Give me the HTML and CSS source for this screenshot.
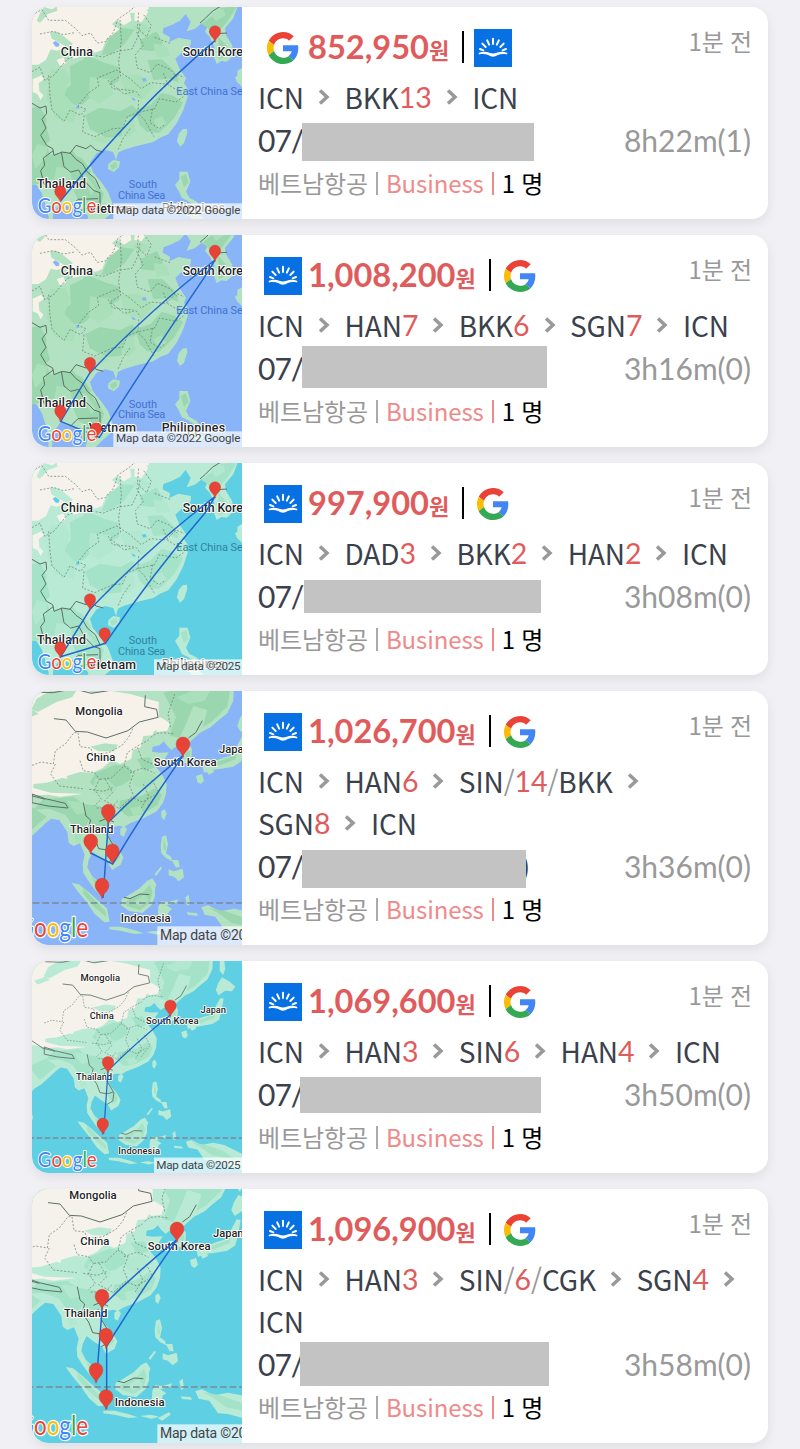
FILE: index.html
```html
<!DOCTYPE html>
<html lang="ko">
<head>
    <meta charset="UTF-8">
    <meta name="viewport" content="width=device-width, initial-scale=1.0">
    <title>항공권 목록</title>
    <link rel="stylesheet" href="styles.css">
</head>
<body>

    <!-- Shared icons and map bases -->
    <svg class="defs" width="0" height="0" aria-hidden="true">
        <symbol id="google" viewBox="0 0 48 48">
            <path fill="#ea4335" d="M24 9.5c3.54 0 6.71 1.22 9.21 3.6l6.85-6.85C35.9 2.38 30.47 0 24 0 14.62 0 6.51 5.38 2.56 13.22l7.98 6.19C12.43 13.72 17.74 9.5 24 9.5z"/>
            <path fill="#4285f4" d="M46.98 24.55c0-1.57-.15-3.09-.38-4.55H24v9.02h12.94c-.58 2.96-2.26 5.48-4.78 7.18l7.73 6c4.51-4.18 7.09-10.36 7.09-17.65z"/>
            <path fill="#fbbc05" d="M10.53 28.59c-.48-1.45-.76-2.99-.76-4.59s.27-3.14.76-4.59l-7.98-6.19C.92 16.46 0 20.12 0 24c0 3.88.92 7.54 2.56 10.78l7.97-6.19z"/>
            <path fill="#34a853" d="M24 48c6.48 0 11.93-2.13 15.89-5.81l-7.73-6c-2.15 1.45-4.92 2.3-8.16 2.3-6.26 0-11.57-4.22-13.47-9.91l-7.98 6.19C6.51 42.62 14.62 48 24 48z"/>
        </symbol>
        <symbol id="sunrise" viewBox="0 0 114 114">
            <rect width="114" height="114" fill="#0770e3"/>
            <path d="M57 29v16M39.500 34l6 13M74.500 34l-6 13M25 44l10 10M89 44l-10 10M18 60l10 4M96 60l-10 4" fill="none" stroke="#fff" stroke-width="6" stroke-linecap="round"/>
            <path d="M15 71c10-4 22-4 31 0 7 3 15 3 22 0 9-4 21-4 31 0 2 2 1 6-2 5-9-2-18-1-26 2-5 3-9 5-14 5s-9-2-14-5c-8-3-17-4-26-2-3 1-4-3-2-5z" fill="#fff"/>
        </symbol>
        <symbol id="chevron" viewBox="0 0 12 16">
            <path d="M2 1.500l7 6.500-7 6.500" fill="none" stroke="#999" stroke-width="3.500"/>
        </symbol>
        <symbol id="pin" viewBox="-17 -50 34 50" overflow="visible">
            <path fill="#e74336" stroke="#c9382c" stroke-width="1" d="M0 0C-2-14-17-18-17-33a17 17 0 0 1 34 0C17-18 2-14 0 0z"/>
        </symbol>

        <!-- East Asia, close zoom -->
        <g id="region">
            <rect class="sea" x="0" y="0" width="720" height="720"/>
            <path class="land" d="M0 0H660L640 55 615 85 618 105 636 135 642 165 620 185 604 183 590 192 580 165 583 140 570 112 555 95 564 76 545 70 525 86 500 94 512 66 497 42 480 62 455 75 430 84 428 100 450 112 448 126 475 113 513 120 512 135 485 158 466 176 478 205 498 235 492 250 502 264 503 290 490 330 470 370 445 403 420 413 400 426 350 438 310 450 294 458 288 480 280 456 255 450 230 460 210 488 218 515 245 548 264 575 278 612 272 642 245 665 220 690 195 690 205 650 188 628 150 622 122 608 100 640 92 720 84 720 86 650 75 610 65 580 50 556 36 548 0 548z"/>
            <path class="land" d="M265 492l15-12 20 4-3 18-16 14-17-9zM488 388l12-2 2 12-10 32-12 10-9-16 5-22zM478 515l25 0 8 30-13 30 10 18 23 12 8 14-17-4-18-12-18-9-10-21-11-18 13-16zM500 625l30 10 20 20-10 12-25-10zM666 204l-14 8 0 15-7 5 6 14 15 14z"/>
            <path class="sand" d="M0 0H392L385 28 360 40 330 38 334 62 312 76 290 60 276 72 300 90 302 120 285 128 262 112 246 150 225 158 205 142 190 168 160 176 135 145 110 152 92 148 78 180 55 194 0 195z"/>
            <path class="land" d="M62 36l10-14 24 6 14-8 2 12-28 10-24 26-10-6zM90 95l20 0 24 16 24 20-10 14-30-16-24-14z"/>
            <path class="sand" d="M38 238l26-12 8 12-16 12 2 24 12 12-8 14-10-18-14-6zM110 180l20-8 8 18-18 8zM345 30l26-6 14 12-20 30-22-4z"/>
            <path class="forest" d="M150 198l58-28 50 20 42 12-2 40-40 24-38 18-30 28-48 6-14-42 24-22zM195 345l44-22 62 10 35-18 22 22-34 28-20 44-44 4-50-26zM345 330l46-16 34-36 36 10 28 20-26 46-26 26-20 18-36-2-22-22zM0 330l60-10 20 38-10 60 22 48 46-12 48 20 28 40-24 30-22-14-60 6-70 20-38-26zM120 470l38-18 52 70 42 60-8 28-34 14-34-20-26-56zM268 112l36-28 40 4-30 44-40 30-30 4zM545 72l60-48 48-8-28 44-24 30-24 4zM595 110l25 28 2 30-26 10zM360 120l50-26 20 36-30 24-36-4zM382 180l44-2 38 36 12 34-30-12-46 4zM482 530l16-8 8 26-14 14zM270 495l18-9 4 14-16 10zM182 190l14-20 12 8-10 20zM60 370l18 2 12 50-16 12z"/>
            <path class="grass" d="M90 210l46-4 14 34-16 44 38 40-12 44-54-14-26-60zM210 230l60 8 10 44-44 30-30-22zM300 230l54-8 48 36-32 40-52-12zM400 130l40 8 10 30-40 4zM52 432l30 10-6 34-30 30-10-40zM110 500l40 6 8 44-32 20-24-30zM315 356l24-8 8 44-24 20-20-12zM400 360l26-12 12 22-22 22zM180 520l18 4 30 44-14 16zM570 40l40-14 6 20-28 18zM338 80l30-10 20 14-20 20zM215 415l30-8 24 14-20 10z"/>
            <path class="sea" d="M98 128l8-5 12 8 0 8-10 2zM334 292l11 4 2 6-9-1zM365 236l12-3 3 10-10 2zM168 318l8-2 3 9-9 2z"/>
            <path class="province" d="M36 45l30-16 20 32 50 0 30 24 20 22 26-8 20 30 24-4 24-28 14-40 30-20 24-20M60 102l40-8 30 10 34-6M36 215l24-14 14 40 26-14 42-50 46-16 62 10 46-18 40-6 18-38 6-40M86 226l4 60 6 44 36 34 18-34 32 16 16-18-24-10 30-38 32-22-4-24 58-24 40 26 34 30 28-18 46 4 30-30 24 10M300 60l4 60-8 68 6 40-32 20 42 34 36-8 14 18M192 346l-4 50 36 14 54-24 30-2 14-34 30-12 52-12 14-30 50 10 22-16M330 386l-20 28-16 36M356 300l-2 40 20 20 28 50M398 326l-8 42 28 18 16-12M350 96l20 40-24 28 6 40 38 14 22-26 38 16 26 28M404 112l46 18M356 38l-4 46 28 26 14-34-26-36M430 220l14 34 44 26M264 240l14 26 62 6"/>
            <path class="frontier" d="M36 310l24 14 18-6 2 22-14 18 12 26-16 22 18 30 18 10 4 20 24-10 24 4 18-24 30 10 14-10 16 14 22 6M100 452l-30 22 4 22-12 16 10 40 18 14M124 456l8 44 20 16 24-6 20 36 26 26 18 6 0 44-20 4-30 0-16 18M150 458l18 20 20 14 14 24 24 20 14 30M150 622l24-24 60-2M540 69l16-14 22-22 24-14M567 95l24 6 30-2"/>
            <g class="water-label">
                <text x="469" y="285" textLength="217">East China Sea</text>
                <text x="326" y="565">South</text>
                <text x="294" y="597" textLength="142">China Sea</text>
            </g>
            <g class="label region-label">
                <text x="122" y="167" textLength="97">China</text>
                <text x="488" y="167" textLength="200">South Korea</text>
                <text x="51" y="564" textLength="147">Thailand</text>
                <text x="206" y="638" textLength="142">Vietnam</text>
                <text x="425" y="637" textLength="190">Philippines</text>
            </g>
        </g>

        <!-- Whole of East and South East Asia, far zoom -->
        <g id="asia">
            <rect class="sea" x="-20" y="0" width="790" height="860"/>
            <path class="land" d="M-20 0H642L640 50 622 88 592 112 572 130 540 146 525 160 505 178 516 196 514 225 498 238 488 234 492 212 478 202 484 188 464 190 455 198 440 184 432 172 418 184 398 188 396 203 418 206 446 205 430 232 408 250 424 268 440 300 438 330 428 358 410 382 372 402 330 418 310 430 300 425 275 430 264 452 274 472 294 492 310 520 302 542 276 558 264 536 238 520 218 504 206 528 202 550 216 576 236 594 242 630 228 622 205 590 190 566 188 540 194 512 180 478 160 486 146 476 142 444 118 408 94 404 78 416 46 446 28 462 0 480-20 505z"/>
            <path class="land" d="M155 597l22 4 28 22 26 24 30 26 8 40-16 2-28-24-26-38-24-28zM268 728l34 0 40 10 30 10-28 2-42-10-34-4zM305 645l18-10 36-22 22-22 16-8 12 18-4 14 0 22-10 26-28 24-40-6-24-18zM415 668l8-16 22 2 30-8-6 10-30 8 18 12-10 6-8 24-8-16-8 18-10-4zM378 744l32-4 26 6-24 6zM432 750l34-18 4 8-26 18zM496 640l10-8 4 28-8 6zM500 685l30 2 4 8-30-2zM544 670l20-6 36 18 42-8 40 8 70 34 10 60-30-10-60-20-30-8-30-2-26-38-32-6zM426 458l12-4 6 26-6 28 16 12 2 12-18-10-14-14-2-22zM446 556l16 6 26-8 4 26-16 12-14-14-16-4zM455 528l20 0 4 22-12 0zM424 382l10-6 6 14-8 18-8-8zM301 434l12-8 8 10-10 22-10-6zM404 570l18-22 4 4-18 24zM-20 560l10 2 6 24-6 12-10 0zM528 276l18-6 6 20-10 10-10-6zM560 262l18-8 4 10-16 8zM548 250l24-14 36-14 28-8 18-34 14-26 12 2-8 46-8 30-24 16-36 6-28 4-24 8zM660 102l14-22 28 16 20 18-12 16-24-2-24 16-10-18zM666 20l14-20 6 50-8 22-12-16z"/>
            <path class="sand" d="M-20 0H180L215 28 268 20 330 30 416 54 416 110 440 118 404 140 396 154 370 156 362 190 338 198 334 224 300 240 274 228 248 252 218 266 180 264 140 276 146 306 186 330 120 338 86 332 50 334-20 320zM388 112l34-12 28 18-8 22-30 4zM90 60l60-30 90-4 80 10-30 30-100 14z"/>
            <path class="land" d="M50 44l38-22 84-6-16 24-46 14-56 30-20-8zM0 92l40-14 16 12-44 16zM40 300l40-4 46-14 56 8 20 40-110-4-52-14zM210 188l44-10 40 4-12 20-46 0z"/>
            <path class="forest" d="M70 346l90-8 28 20 20 46-18 40-30-18-24-34-50-18-46 4zM225 268l60-26 40 4 20 34-44 26-62 10-30-20zM300 350l66-14 40-24 20 20-14 32-46 26-42 8-28-22zM195 360l44 6 34 28-12 40-30 2-34-34zM430 26l92-26 110 6-10 62-48 46-26 14 14-50-42-12-20 50-22 46-30-8 20-56zM266 460l28 38 6 22-16 16-18-26zM214 578l22 20 0 20zM190 612l34 36 32 34 2 16-34-28-34-40zM320 650l44-20 26-28 8 24-10 32-28 20-40-12zM432 462l8 40-10-8zM566 672l50 10 60 20 60 40-50-14-50-10-40-30zM560 246l74-28 22-28-10 36-46 18zM350 224l40-4 14 30-32 12zM-20 400l60-28 40 26-60 52zM495 205l16-5-2 25-10 2z"/>
            <path class="grass" d="M225 284l40 4 28 26-26 20-48-8zM330 270l50-10 34 24-30 30-44-8zM140 350l44 4 16 30-30 8zM470 40l44-18 60-8-20 36-50 10zM150 420l30 14 10 34-22 8zM330 372l32-6 8 20-30 10zM340 655l34-24 12 18-26 18z"/>
            <path class="province" d="M36 244l28-10 36 6 6-40 30-20 26-34 12 0 6 42 32 4 8 20 46-6 40-22 20-24 14-30M106 240l-14 30 26 36 70 8M180 230l10 30 34 6 14 20-14 30 20 30-22 20M240 286l34-4 38-36 10-40 30-20 34-18M256 286l22 40-24 24 44 24 36-34 34 14 34-20M312 246l30 20-14 38 14 34-34 32M330 266l40-14 34 16M352 190l14 36 40 18M370 300l16 36-22 36M396 288l20 36-34 44M392 160l18-12 22-2 32 4M452 130l-8-40 20-60M208 316l42 6 30-12M230 372l42 0 22-22"/>
            <path class="frontier" d="M102 104l36 4 28 34 36 2 56 18 66-22 34-26 56-14-4-24-36-8 2-34M40 24l60 2 60-12 54 14 52-8M36 330l40 14 60 14 8 14-60-6-48-10zM190 356l8 40 14 12-8 28 20 26 12 32 26 4 22-6M238 412l20-8 24 10M252 424l10 30 24 40-4 30-20 12M-20 300l50 34 46 12M505 162l22-16 20-36M312 640l18 4 30-14 28 2"/>
            <path class="equator" d="M-20 657H770"/>
            <g class="label">
                <text x="166" y="94" textLength="142">Mongolia</text>
                <text x="199" y="230" textLength="87">China</text>
                <text x="401" y="246" textLength="189">South Korea</text>
                <text x="597" y="208" textLength="92">Japan</text>
                <text x="150" y="447" textLength="130">Thailand</text>
                <text x="302" y="715" textLength="150">Indonesia</text>
            </g>
        </g>

        <text id="wordmark" class="wordmark" textLength="176" lengthAdjust="spacingAndGlyphs"><tspan fill="#4285f4">G</tspan><tspan fill="#ea4335">o</tspan><tspan fill="#fbbc05">o</tspan><tspan fill="#4285f4">g</tspan><tspan fill="#34a853">l</tspan><tspan fill="#ea4335">e</tspan></text>
    </svg>

    <main class="fare-list">

        <article class="fare">
            <svg class="map classic" viewBox="36 21 630 636" preserveAspectRatio="xMidYMid slice">
                <use href="#region"/>
                <path class="route" d="M585 122Q350 320 122 602"/>
                <use href="#pin" x="568" y="77" width="34" height="50"/>
                <use href="#pin" x="104" y="557" width="34" height="50"/>
                <rect class="credit-bg" x="280" y="610" width="390" height="50"/>
                <text class="credit" x="288" y="643" textLength="373">Map data ©2022 Google</text>
                <use href="#wordmark" x="53" y="639"/>
            </svg>
            <div class="info">
                <div class="top">
                    <svg class="logo google"><use href="#google"/></svg>
                    <strong class="price">852,950<small>원</small></strong>
                    <i class="bar"></i>
                    <svg class="logo"><use href="#sunrise"/></svg>
                    <time>1분 전</time>
                </div>
                <div class="path">
                    <span class="leg">ICN<svg class="arrow"><use href="#chevron"/></svg></span>
                    <span class="leg">BKK<b>13</b><svg class="arrow"><use href="#chevron"/></svg></span>
                    <span class="leg">ICN</span>
                </div>
                <div class="dates"><span class="date">07/</span><span class="mask mask-1"></span><span class="duration">8h22m(1)</span></div>
                <div class="meta">베트남항공 <i class="line"></i> <em>Business</em> <i class="line pink"></i> <span class="people">1 명</span></div>
            </div>
        </article>

        <article class="fare">
            <svg class="map classic" viewBox="36 47 630 636" preserveAspectRatio="xMidYMid slice">
                <use href="#region"/>
                <path class="route" d="M585 122Q400 262 210 460L122 606 238 654Q380 430 555 171L585 122"/>
                <use href="#pin" x="568" y="77" width="34" height="50"/>
                <use href="#pin" x="193" y="414" width="34" height="50"/>
                <use href="#pin" x="104" y="557" width="34" height="50"/>
                <use href="#pin" x="211" y="610" width="34" height="50"/>
                <rect class="credit-bg" x="280" y="636" width="390" height="50"/>
                <text class="credit" x="288" y="669" textLength="373">Map data ©2022 Google</text>
                <use href="#wordmark" x="53" y="665"/>
            </svg>
            <div class="info">
                <div class="top">
                    <svg class="logo"><use href="#sunrise"/></svg>
                    <strong class="price">1,008,200<small>원</small></strong>
                    <i class="bar"></i>
                    <svg class="logo google"><use href="#google"/></svg>
                    <time>1분 전</time>
                </div>
                <div class="path">
                    <span class="leg">ICN<svg class="arrow"><use href="#chevron"/></svg></span>
                    <span class="leg">HAN<b>7</b><svg class="arrow"><use href="#chevron"/></svg></span>
                    <span class="leg">BKK<b>6</b><svg class="arrow"><use href="#chevron"/></svg></span>
                    <span class="leg">SGN<b>7</b><svg class="arrow"><use href="#chevron"/></svg></span>
                    <span class="leg">ICN</span>
                </div>
                <div class="dates"><span class="date">07/</span><span class="mask mask-2"></span><span class="duration">3h16m(0)</span></div>
                <div class="meta">베트남항공 <i class="line"></i> <em>Business</em> <i class="line pink"></i> <span class="people">1 명</span></div>
            </div>
        </article>

        <article class="fare">
            <svg class="map fresh" viewBox="36 21 630 636" preserveAspectRatio="xMidYMid slice">
                <use href="#region"/>
                <path class="route" d="M585 122Q400 262 210 460L122 602 256 562Q400 350 555 171L585 122"/>
                <use href="#pin" x="568" y="77" width="34" height="50"/>
                <use href="#pin" x="193" y="413" width="34" height="50"/>
                <use href="#pin" x="237" y="515" width="34" height="50"/>
                <use href="#pin" x="104" y="557" width="34" height="50"/>
                <rect class="credit-bg" x="402" y="610" width="270" height="50"/>
                <text class="credit" x="409" y="643" textLength="253">Map data ©2025</text>
                <use href="#wordmark" x="53" y="639"/>
            </svg>
            <div class="info">
                <div class="top">
                    <svg class="logo"><use href="#sunrise"/></svg>
                    <strong class="price">997,900<small>원</small></strong>
                    <i class="bar"></i>
                    <svg class="logo google"><use href="#google"/></svg>
                    <time>1분 전</time>
                </div>
                <div class="path">
                    <span class="leg">ICN<svg class="arrow"><use href="#chevron"/></svg></span>
                    <span class="leg">DAD<b>3</b><svg class="arrow"><use href="#chevron"/></svg></span>
                    <span class="leg">BKK<b>2</b><svg class="arrow"><use href="#chevron"/></svg></span>
                    <span class="leg">HAN<b>2</b><svg class="arrow"><use href="#chevron"/></svg></span>
                    <span class="leg">ICN</span>
                </div>
                <div class="dates"><span class="date">07/</span><span class="mask mask-3"></span><span class="duration">3h08m(0)</span></div>
                <div class="meta">베트남항공 <i class="line"></i> <em>Business</em> <i class="line pink"></i> <span class="people">1 명</span></div>
            </div>
        </article>

        <article class="fare">
            <svg class="map classic" viewBox="36 21 630 762" preserveAspectRatio="xMidYMid slice">
                <use href="#asia"/>
                <path class="route" d="M489 215Q370 310 265 415L249 642M212 507L278 540Q380 370 489 215"/>
                <use href="#pin" x="468" y="159" width="42" height="61"/>
                <use href="#pin" x="244" y="361" width="42" height="61"/>
                <use href="#pin" x="191" y="450" width="42" height="61"/>
                <use href="#pin" x="256" y="480" width="42" height="61"/>
                <use href="#pin" x="225" y="583" width="42" height="61"/>
                <rect class="credit-bg" x="412" y="727" width="270" height="60"/>
                <text class="credit large" x="420" y="767" textLength="305">Map data ©2025</text>
                <use href="#wordmark" transform="translate(-7 760) scale(1.2)"/>
            </svg>
            <div class="info">
                <div class="top">
                    <svg class="logo"><use href="#sunrise"/></svg>
                    <strong class="price">1,026,700<small>원</small></strong>
                    <i class="bar"></i>
                    <svg class="logo google"><use href="#google"/></svg>
                    <time>1분 전</time>
                </div>
                <div class="path">
                    <span class="leg">ICN<svg class="arrow"><use href="#chevron"/></svg></span>
                    <span class="leg">HAN<b>6</b><svg class="arrow"><use href="#chevron"/></svg></span>
                    <span class="leg">SIN<u>/</u><b>14</b><u>/</u>BKK<svg class="arrow"><use href="#chevron"/></svg></span>
                    <span class="leg">SGN<b>8</b><svg class="arrow"><use href="#chevron"/></svg></span>
                    <span class="leg">ICN</span>
                </div>
                <div class="dates"><span class="date">07/</span><span class="mask mask-4"></span><span class="tail">)</span><span class="duration">3h36m(0)</span></div>
                <div class="meta">베트남항공 <i class="line"></i> <em>Business</em> <i class="line pink"></i> <span class="people">1 명</span></div>
            </div>
        </article>

        <article class="fare">
            <svg class="map fresh" viewBox="-8 21 754 762" preserveAspectRatio="xMidYMid slice">
                <use href="#asia"/>
                <path class="route" d="M489 215Q370 310 265 415L249 642"/>
                <use href="#pin" x="468" y="161" width="42" height="61"/>
                <use href="#pin" x="244" y="364" width="42" height="61"/>
                <use href="#pin" x="225" y="585" width="42" height="61"/>
                <rect class="credit-bg" x="430" y="727" width="320" height="60"/>
                <text class="credit large" x="438" y="767" textLength="303">Map data ©2025</text>
                <use href="#wordmark" transform="translate(13 761) scale(1.2)"/>
            </svg>
            <div class="info">
                <div class="top">
                    <svg class="logo"><use href="#sunrise"/></svg>
                    <strong class="price">1,069,600<small>원</small></strong>
                    <i class="bar"></i>
                    <svg class="logo google"><use href="#google"/></svg>
                    <time>1분 전</time>
                </div>
                <div class="path">
                    <span class="leg">ICN<svg class="arrow"><use href="#chevron"/></svg></span>
                    <span class="leg">HAN<b>3</b><svg class="arrow"><use href="#chevron"/></svg></span>
                    <span class="leg">SIN<b>6</b><svg class="arrow"><use href="#chevron"/></svg></span>
                    <span class="leg">HAN<b>4</b><svg class="arrow"><use href="#chevron"/></svg></span>
                    <span class="leg">ICN</span>
                </div>
                <div class="dates"><span class="date">07/</span><span class="mask mask-5"></span><span class="duration">3h50m(0)</span></div>
                <div class="meta">베트남항공 <i class="line"></i> <em>Business</em> <i class="line pink"></i> <span class="people">1 명</span></div>
            </div>
        </article>

        <article class="fare">
            <svg class="map fresh" viewBox="54 63 630 762" preserveAspectRatio="xMidYMid slice">
                <use href="#asia"/>
                <path class="route" d="M489 215Q370 310 265 415L247 642M489 215Q380 370 278 534L278 722"/>
                <use href="#pin" x="468" y="162" width="42" height="61"/>
                <use href="#pin" x="243" y="364" width="42" height="61"/>
                <use href="#pin" x="255" y="481" width="42" height="61"/>
                <use href="#pin" x="225" y="585" width="42" height="61"/>
                <use href="#pin" x="255" y="665" width="42" height="61"/>
                <rect class="credit-bg" x="430" y="769" width="270" height="60"/>
                <text class="credit large" x="438" y="809" textLength="305">Map data ©2025</text>
                <use href="#wordmark" transform="translate(11 801) scale(1.2)"/>
            </svg>
            <div class="info">
                <div class="top">
                    <svg class="logo"><use href="#sunrise"/></svg>
                    <strong class="price">1,096,900<small>원</small></strong>
                    <i class="bar"></i>
                    <svg class="logo google"><use href="#google"/></svg>
                    <time>1분 전</time>
                </div>
                <div class="path">
                    <span class="leg">ICN<svg class="arrow"><use href="#chevron"/></svg></span>
                    <span class="leg">HAN<b>3</b><svg class="arrow"><use href="#chevron"/></svg></span>
                    <span class="leg">SIN<u>/</u><b>6</b><u>/</u>CGK<svg class="arrow"><use href="#chevron"/></svg></span>
                    <span class="leg">SGN<b>4</b><svg class="arrow"><use href="#chevron"/></svg></span>
                    <span class="leg">ICN</span>
                </div>
                <div class="dates"><span class="date">07/</span><span class="mask mask-6"></span><span class="duration">3h58m(0)</span></div>
                <div class="meta">베트남항공 <i class="line"></i> <em>Business</em> <i class="line pink"></i> <span class="people">1 명</span></div>
            </div>
        </article>

    </main>
</body>
</html>
```
FILE: styles.css
```css
body {
    margin: 0;
    background-color: #f0f0f5;
    font-family: "Noto Sans CJK KR", sans-serif;
    color: #3b414c;
}

.defs {
    display: block;
    height: 0;
}

.fare-list {
    display: flex;
    flex-direction: column;
    gap: 16px;
    padding: 7px 32px 6px;
}

.fare {
    display: flex;
    height: 212px;
    background-color: #ffffff;
    border-radius: 16px;
    overflow: hidden;
    box-shadow: 0 4px 12px rgba(0, 0, 0, 0.08);
}

/* Long routes take a second line */
.fare:nth-child(4),
.fare:nth-child(6) {
    height: 254px;
}

.info {
    flex: 1;
    padding: 16px 16px 12px;
    min-width: 0;
}

/* Price row */
.top {
    display: flex;
    align-items: center;
    height: 50px;
    margin-bottom: 3px;
    padding-left: 6px;
}

.logo {
    width: 38px;
    height: 38px;
    flex: none;
}

.logo.google {
    box-sizing: border-box;
    padding: 3px;
}

.price {
    font-family: Lato, "Noto Sans CJK KR", sans-serif;
    font-size: 32.6px;
    line-height: 50px;
    font-weight: 700;
    color: #e05c5c;
    margin: 2px 0 0 6px;
    white-space: nowrap;
}

.price small {
    font-size: 22px;
}

.bar {
    width: 2px;
    height: 32px;
    background-color: #000;
    margin: -3px 10px 0 13px;
}

time {
    margin: -14px 0 0 auto;
    font-size: 24px;
    line-height: 24px;
    letter-spacing: -0.2px;
    color: #999;
}

/* Airports */
.path {
    display: flex;
    flex-wrap: wrap;
    margin-bottom: 2px;
    font-size: 28px;
    line-height: 42px;
    letter-spacing: -0.1px;
}

.leg {
    display: flex;
    align-items: center;
}

.path b {
    font-family: Lato, sans-serif;
    font-size: 28.5px;
    font-weight: 400;
    color: #e05c5c;
}

.path u {
    color: #999;
    text-decoration: none;
}

.arrow {
    width: 12px;
    height: 16px;
    margin: 0 14.5px 0 14px;
}

/* Dates and duration */
.dates {
    display: flex;
    height: 42px;
    font-family: Lato, sans-serif;
    font-size: 30px;
    line-height: 41px;
}

.date {
    width: 44px;
    letter-spacing: -1px;
}

.mask {
    height: 38px;
    margin-top: 3px;
    background-color: #c3c3c3;
    z-index: 1;
}

.mask-1 { width: 232px; }
.mask-2 { width: 245px; height: 42px; margin-top: -2px; }
.mask-3 { width: 237px; height: 33px; margin: 4px 0 0 2px; }
.mask-4 { width: 224px; margin-top: 4px; }
.mask-5 { width: 241px; height: 36px; margin: 3px 0 0 -2px; }
.mask-6 { width: 249px; height: 44px; margin: -2px 0 0 -2px; }

.tail {
    margin-left: -5px;
}

.duration {
    margin: 0 1px 0 auto;
    color: #999;
}

/* Airline, cabin and passengers */
.meta {
    display: flex;
    align-items: center;
    font-size: 24px;
    line-height: 42px;
    height: 42px;
    letter-spacing: -0.1px;
    color: #999;
    white-space: nowrap;
}

.meta em {
    font-style: normal;
    letter-spacing: -0.1px;
    color: #f08a8a;
}

.line {
    width: 2px;
    height: 23px;
    margin: 0 8px;
    background-color: #aaa;
}

.line.pink {
    background-color: #f08a8a;
}

.people {
    color: #000;
    letter-spacing: -0.3px;
}

/* Maps */
.map {
    width: 210px;
    flex: none;
    align-self: stretch;
    border-radius: 0 0 0 16px;
}

.classic {
    --sea: #8ab4f8;
    --land: #b3e2c3;
    --forest: #9ad6ae;
    --grass: #a9dfb9;
    --sand: #f6f2e9;
    --water-text: #4272cf;
}

.fresh {
    --sea: #5fd0e3;
    --land: #b8ead5;
    --forest: #a4e3c8;
    --grass: #b2e8d0;
    --sand: #f5f1eb;
    --water-text: #31839f;
}

.sea { fill: var(--sea); }
.land { fill: var(--land); }
.forest { fill: var(--forest); }
.grass { fill: var(--grass); }
.sand { fill: var(--sand); }

.province,
.frontier,
.equator,
.route {
    fill: none;
}

.province {
    stroke: #66756b;
    stroke-width: 2.5;
    stroke-dasharray: 6 5;
    opacity: 0.8;
}

.frontier {
    stroke: #5d6f66;
    stroke-width: 3;
}

.equator {
    stroke: #7e8797;
    stroke-width: 5;
    stroke-dasharray: 20 9;
}

.route {
    stroke: #1f67d0;
    stroke-width: 4.5;
}

.label {
    font-family: Roboto, sans-serif;
    font-size: 34px;
    font-weight: 500;
    fill: #222;
    stroke: #fff;
    stroke-width: 6;
    stroke-linejoin: round;
    paint-order: stroke;
}

.region-label {
    font-size: 37px;
}

.water-label {
    font-family: Roboto, sans-serif;
    font-size: 33px;
    fill: var(--water-text);
}

.credit-bg {
    fill: #fff;
    opacity: 0.7;
}

.credit {
    font-family: Roboto, sans-serif;
    font-size: 35px;
    fill: #444;
}

.credit.large {
    font-size: 42px;
}

.wordmark {
    font-family: Lato, sans-serif;
    font-size: 66px;
    font-weight: 400;
    stroke: #fff;
    stroke-width: 6;
    stroke-linejoin: round;
    paint-order: stroke;
}
```
